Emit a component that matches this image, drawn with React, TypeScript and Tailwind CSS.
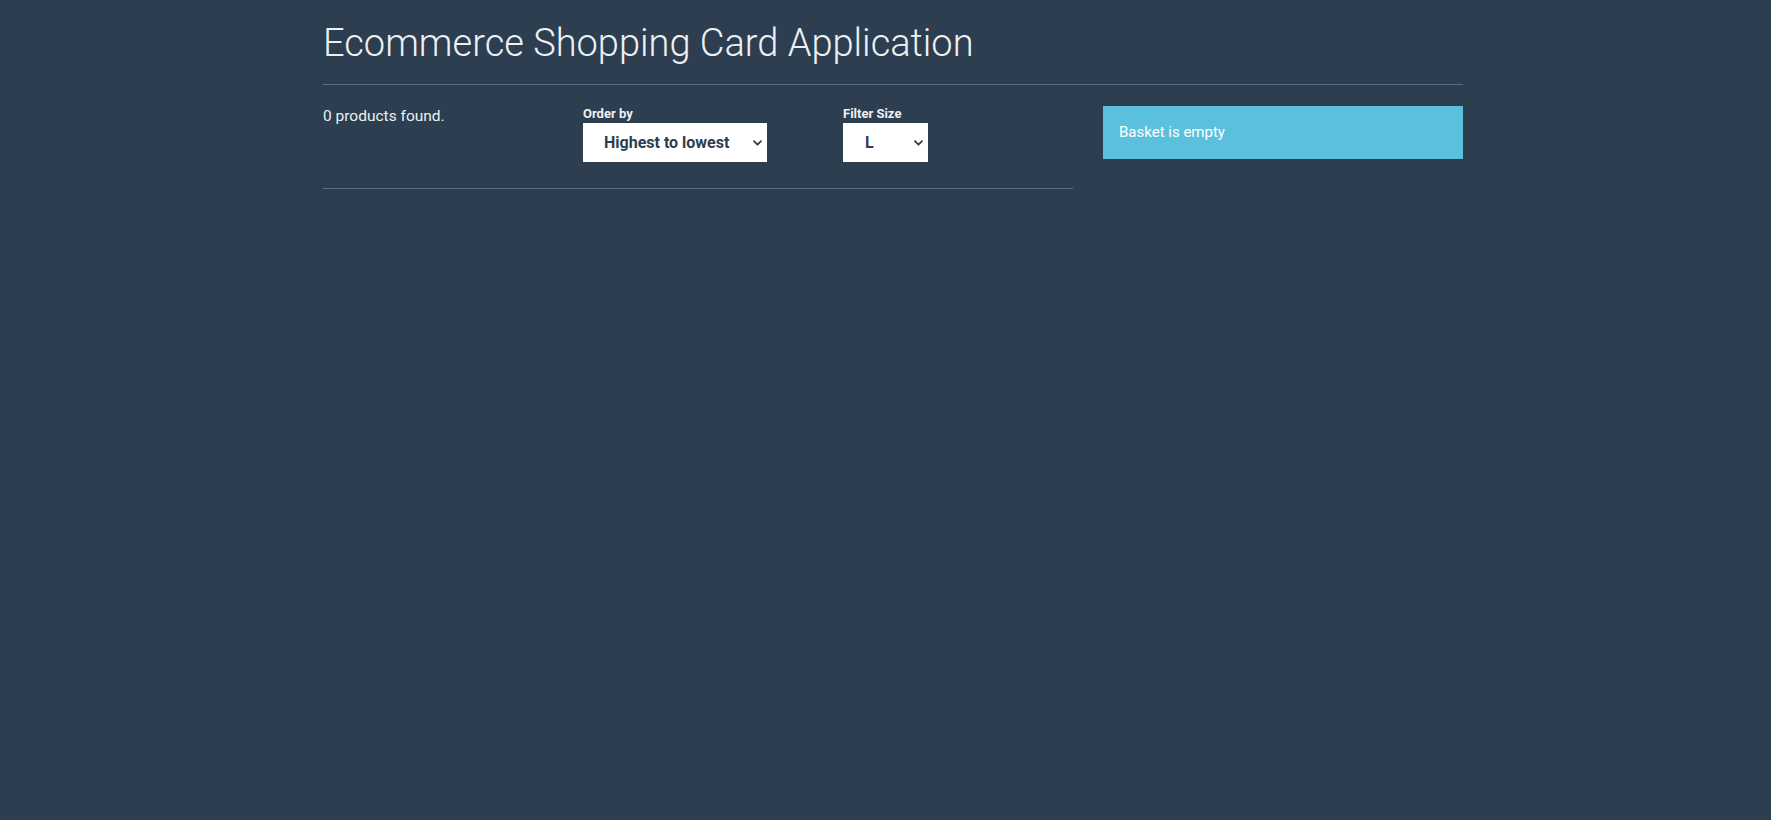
import { useState } from "react";

const Chevron = () => (
  <svg
    className="pointer-events-none absolute right-[5px] top-1/2 -translate-y-1/2"
    width="9"
    height="6"
    viewBox="0 0 9 6"
    fill="none"
  >
    <path d="M1 1.2l3.5 3.5 3.5-3.5" stroke="#2c3e50" strokeWidth="1.8" strokeLinecap="round" strokeLinejoin="round" />
  </svg>
);

const Filter = () => {
  const [sort, setSort] = useState("highest");
  const [size, setSize] = useState("L");

  return (
    <div className="grid grid-cols-[230px_230px_230px] gap-x-[30px]">
      <div className="text-[15.5px] leading-5 text-[#eef1f4]">0 products found.</div>
      <div>
        <label className="block text-[13px] font-bold leading-4 text-[#eef1f4]">Order by</label>
        <div className="relative mt-px w-[184px]">
          <select
            value={sort}
            onChange={(e) => setSort(e.target.value)}
            className="block h-[39px] w-full appearance-none rounded-none border-0 bg-white pl-[21px] text-[16px] font-bold text-[#2c3e50] outline-none"
          >
            <option value="lowest">Lowest to highest</option>
            <option value="highest">Highest to lowest</option>
          </select>
          <Chevron />
        </div>
      </div>
      <div>
        <label className="block text-[13px] font-bold leading-4 text-[#eef1f4]">Filter Size</label>
        <div className="relative mt-px w-[85px]">
          <select
            value={size}
            onChange={(e) => setSize(e.target.value)}
            className="block h-[39px] w-full appearance-none rounded-none border-0 bg-white pl-[22px] text-[16px] font-bold text-[#2c3e50] outline-none"
          >
            <option value="">ALL</option>
            <option value="XS">XS</option>
            <option value="S">S</option>
            <option value="M">M</option>
            <option value="L">L</option>
            <option value="XL">XL</option>
            <option value="XXL">XXL</option>
          </select>
          <Chevron />
        </div>
      </div>
    </div>
  );
};

const App = () => {
  return (
    <div className="min-h-[820px] bg-[#2c3e50] font-['Roboto','Liberation_Sans',sans-serif] text-white">
      <div className="ml-[323px] w-[1140px]">
        <h1 className="pt-[20px] text-[38px] font-light leading-[46px] text-[#eef1f4]">
          Ecommerce Shopping Card Application
        </h1>
        <hr className="mt-[18px] border-t border-[#5d6e7f]" />
        <div className="mt-[21px] flex gap-x-[30px]">
          <div className="w-[750px]">
            <Filter />
            <hr className="mt-[26px] border-t border-[#5d6e7f]" />
          </div>
          <div className="w-[360px]">
            <div className="flex h-[53px] items-center bg-[#5bc0de] px-4 text-[15px] text-white">
              Basket is empty
            </div>
          </div>
        </div>
      </div>
    </div>
  );
};

export default App;
